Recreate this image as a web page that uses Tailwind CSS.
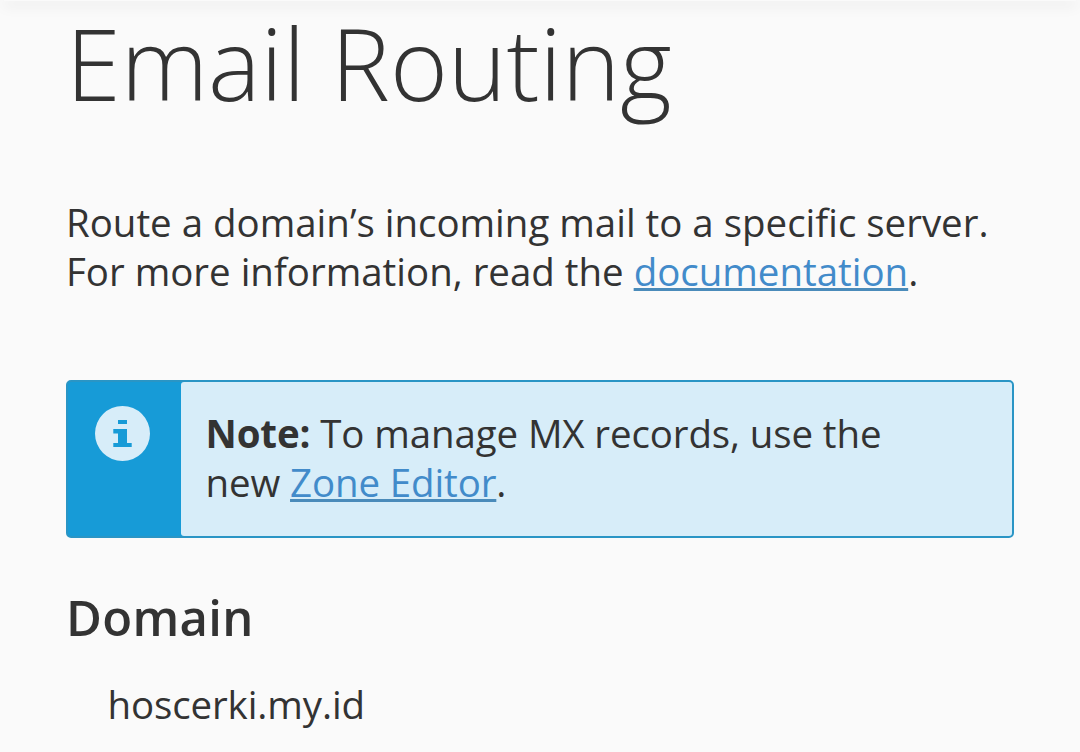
<!DOCTYPE html>
<html lang="en">
    <head>
        <meta charset="UTF-8" />
        <meta name="viewport" content="width=device-width, initial-scale=1.0" />
        <title>Email Routing</title>
        <script src="https://cdn.jsdelivr.net/npm/@tailwindcss/browser@4"></script>
    </head>
    <body
        class="h-[752px] overflow-hidden bg-[#fafafa] font-['Open_Sans',sans-serif] text-[38.45px] leading-[49px] text-[#333]"
    >
        <!-- bottom edge of the header bar -->
        <div class="mx-1 h-px bg-[#fafafa] shadow-[0_3px_14px_1px_rgba(0,0,0,0.14)]"></div>
        <main class="px-[66px]">
            <h1 class="h-[124px] text-[99px] leading-[124px] font-light">
                Email Routing
            </h1>
            <p class="mt-[73px] whitespace-nowrap">
                Route a domain’s incoming mail to a specific server.<br />
                For more information, read the
                <a
                    href="#"
                    class="text-[#428bca] underline decoration-[#4a8bba] decoration-3 underline-offset-2"
                    >documentation</a
                >.
            </p>

            <div
                class="mt-[84px] flex h-[158px] w-[948px] rounded-[5px] border-2 border-[#2a95c5] bg-[#179bd7]"
            >
                <div class="w-[113px] pt-6 pl-[27px]">
                    <svg class="size-[55px]" viewBox="0 0 55 55" aria-hidden="true">
                        <circle cx="27.5" cy="27.5" r="27.5" fill="#d7edf9" />
                        <path
                            fill="#179bd7"
                            d="M23 14h9v4h-9zM18.3 23H32v14h4.7v4H18.3v-4H23v-9.5h-4.7z"
                        />
                    </svg>
                </div>
                <p
                    class="flex-1 rounded-[3px] bg-[#d7edf9] pt-[27px] pl-[24.5px] tracking-[-0.1px]"
                >
                    <strong class="font-bold">Note:</strong> To manage MX
                    records, use the<br />
                    new
                    <a
                        href="#"
                        class="text-[#428bca] underline decoration-[#4a8bba] decoration-3 underline-offset-2"
                        >Zone Editor</a
                    >.
                </p>
            </div>

            <h2
                class="mt-[49px] text-[49px] leading-[60px] font-semibold tracking-[0.3px]"
            >
                Domain
            </h2>
            <p class="mt-[33px] pl-[41.5px] tracking-[-0.1px]">hoscerki.my.id</p>
        </main>
    </body>
</html>
